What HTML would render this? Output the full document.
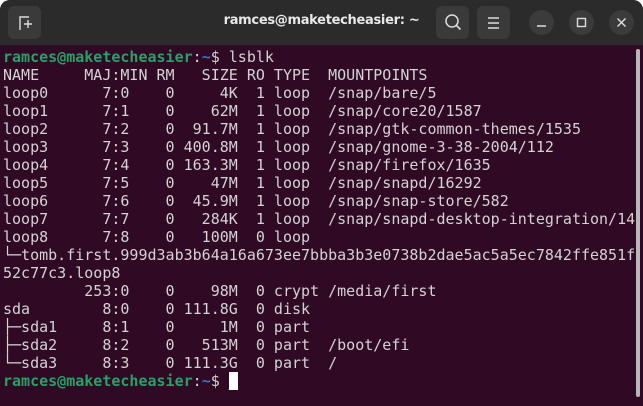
<!DOCTYPE html>
<html><head><meta charset="utf-8"><style>
*{margin:0;padding:0;box-sizing:border-box}
html,body{width:643px;height:406px;overflow:hidden;background:#fff}
.win{position:absolute;left:0;top:0;width:643px;height:406px;background:#300a24;border-radius:10px 10px 0 0;overflow:hidden}
.tb{position:absolute;left:0;top:0;width:643px;height:45px;background:#2b2b2b}
.btn{position:absolute;top:6px;width:33px;height:33px;background:#3a3a3a;border-radius:6px}
.c{position:absolute;top:10px;width:25px;height:25px;border-radius:50%;background:#3b3b3b}
.title{position:absolute;left:0;width:643px;top:13px;text-align:center;color:#e8e8e8;font:bold 13px "DejaVu Sans","Liberation Sans",sans-serif;letter-spacing:-0.3px}
pre{position:absolute;left:3px;top:48px;font:15px/18px "DejaVu Sans Mono","Liberation Mono",monospace;color:#d3d3d3;letter-spacing:0}
.g{color:#26a269;font-weight:bold}.b{color:#3a74c8;font-weight:bold}
.cur{background:#fff;color:#fff}
.sb{position:absolute;left:636px;top:49px;width:4px;height:348px;background:#b8b8b8;border-radius:2px}
</style></head><body><div class="win">
<div class="tb">
<div class="btn" style="left:8px"><svg width="33" height="33"><path d="M12 24V11h9M12 24" stroke="#ddd" stroke-width="1.4" fill="none"/><path d="M20 14v8M16 18h8" stroke="#ddd" stroke-width="1.4"/></svg></div>
<div class="title">ramces@maketecheasier: ~</div>
<div class="btn" style="left:436px"><svg width="33" height="33"><circle cx="16" cy="15" r="6" stroke="#ddd" stroke-width="1.5" fill="none"/><path d="M20.5 19.5l4 4" stroke="#ddd" stroke-width="1.6"/></svg></div>
<div class="btn" style="left:477px"><svg width="33" height="33"><path d="M11 12h11M11 17h11M11 22h11" stroke="#ddd" stroke-width="1.4"/></svg></div>
<div class="c" style="left:529px"><svg width="25" height="25"><path d="M8 16h9" stroke="#ddd" stroke-width="1.5"/></svg></div>
<div class="c" style="left:569px"><svg width="25" height="25"><rect x="8.5" y="8.5" width="8" height="8" stroke="#ddd" stroke-width="1.4" fill="none"/></svg></div>
<div class="c" style="left:609px"><svg width="25" height="25"><path d="M8.5 8.5l8 8M16.5 8.5l-8 8" stroke="#ddd" stroke-width="1.4"/></svg></div>
</div>
<pre><span class="g">ramces@maketecheasier</span>:<span class="b">~</span>$ lsblk
NAME     MAJ:MIN RM   SIZE RO TYPE  MOUNTPOINTS
loop0      7:0    0     4K  1 loop  /snap/bare/5
loop1      7:1    0    62M  1 loop  /snap/core20/1587
loop2      7:2    0  91.7M  1 loop  /snap/gtk-common-themes/1535
loop3      7:3    0 400.8M  1 loop  /snap/gnome-3-38-2004/112
loop4      7:4    0 163.3M  1 loop  /snap/firefox/1635
loop5      7:5    0    47M  1 loop  /snap/snapd/16292
loop6      7:6    0  45.9M  1 loop  /snap/snap-store/582
loop7      7:7    0   284K  1 loop  /snap/snapd-desktop-integration/14
loop8      7:8    0   100M  0 loop
└─tomb.first.999d3ab3b64a16a673ee7bbba3b3e0738b2dae5ac5a5ec7842ffe851f
52c77c3.loop8
         253:0    0    98M  0 crypt /media/first
sda        8:0    0 111.8G  0 disk
├─sda1     8:1    0     1M  0 part
├─sda2     8:2    0   513M  0 part  /boot/efi
└─sda3     8:3    0 111.3G  0 part  /
<span class="g">ramces@maketecheasier</span>:<span class="b">~</span>$ <span class="cur">_</span></pre>
<div class="sb"></div>
</div></body></html>
